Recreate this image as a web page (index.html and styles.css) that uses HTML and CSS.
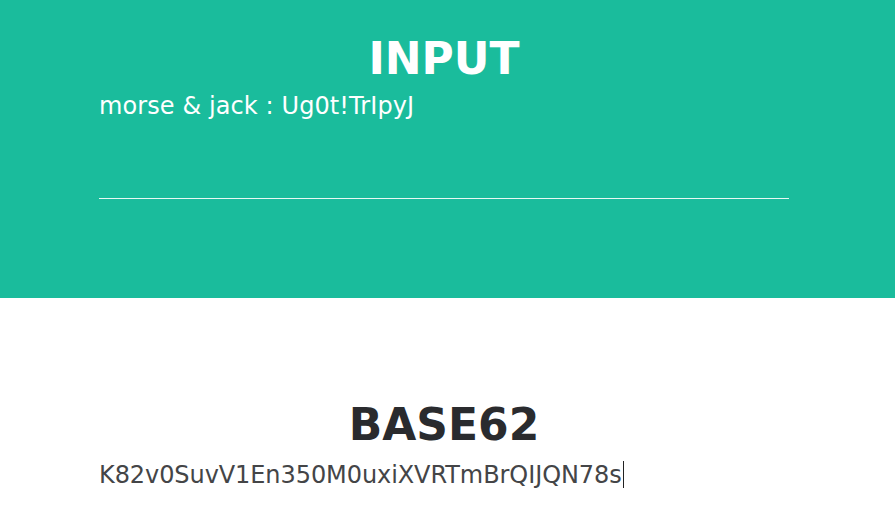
FILE: index.html
```html
<!DOCTYPE html>
<html>
<head>
<meta charset="utf-8">
<link rel="stylesheet" href="styles.css">
</head>
<body>
<section class="band band-input">
  <div class="container">
    <h2 class="title title-light">INPUT</h2>
    <div class="field field-input">morse &amp; jack : Ug0t!TrIpyJ</div>
  </div>
</section>
<section class="band band-output">
  <div class="container">
    <h2 class="title title-dark">BASE62</h2>
    <div class="field field-output">K82v0SuvV1En350M0uxiXVRTmBrQIJQN78s<span class="caret"></span></div>
  </div>
</section>
</body>
</html>
```
FILE: styles.css
```css
html, body {
  margin: 0;
  padding: 0;
  background: #ffffff;
}
body {
  font-family: "DejaVu Sans", sans-serif;
}
.band-input {
  background: #1abc9c;
  padding: 33px 0 99px;
}
.band-output {
  background: #ffffff;
  padding: 101px 0 40px;
}
.container {
  width: 690px;
  margin-left: 99px;
}
.title {
  margin: 0;
  text-align: center;
  font-family: "DejaVu Sans", sans-serif;
  font-weight: 700;
  font-size: 44px;
  line-height: 52px;
  letter-spacing: 0;
}
.title-light {
  color: #ffffff;
}
.title-dark {
  color: #2a2b2e;
}
.field {
  font-size: 24px;
  line-height: 36px;
  letter-spacing: 0.1px;
}
.field-input {
  margin-top: 3px;
  height: 110px;
  color: #ffffff;
  border-bottom: 1px solid #e8f8f4;
}
.field-output {
  margin-top: 6px;
  color: #444547;
  letter-spacing: -0.08px;
}
.caret {
  display: inline-block;
  width: 1px;
  height: 27px;
  background: #222;
  vertical-align: -5px;
  margin-left: 1px;
}
```
